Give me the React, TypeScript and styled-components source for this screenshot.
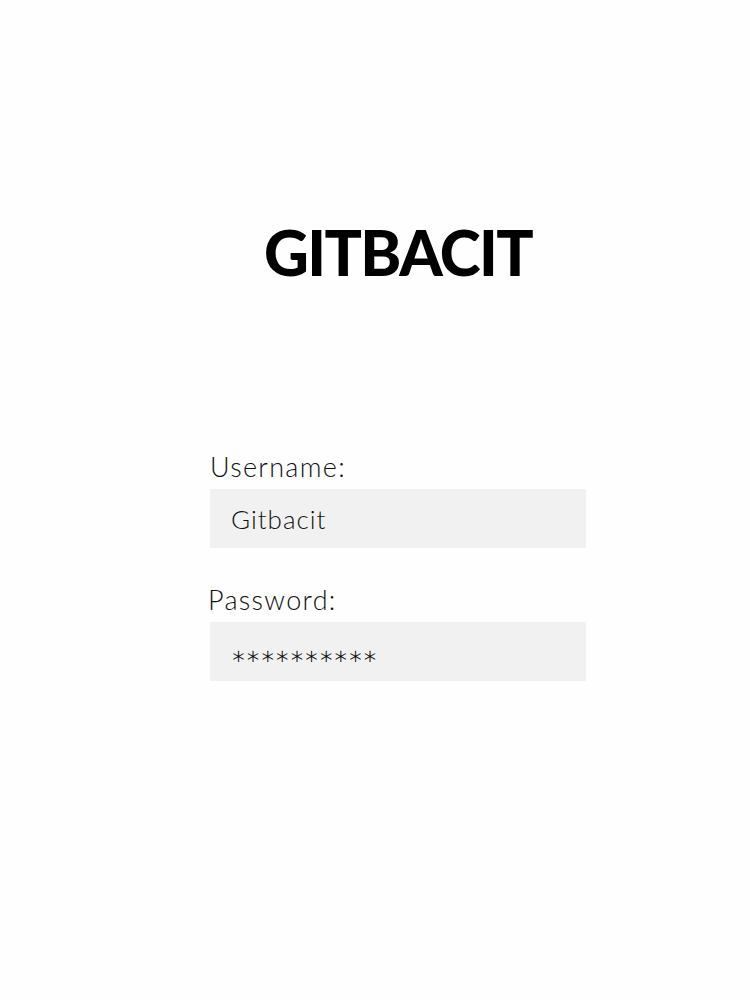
import React from "react";
import styled, { createGlobalStyle } from "styled-components";

const Global = createGlobalStyle`
  html, body { margin: 0; padding: 0; background: #fefefe; }
  * { box-sizing: border-box; }
`;

const Page = styled.div`
  width: 750px;
  height: 1000px;
  display: flex;
  flex-direction: column;
  align-items: flex-start;
  padding-left: 210px;
  padding-top: 214px;
`;

const Title = styled.h1`
  margin: 0;
  width: 376px;
  text-align: center;
  font-family: "Lato", sans-serif;
  font-weight: 900;
  font-size: 62px;
  line-height: 76px;
  letter-spacing: -1.6px;
  color: #000;
`;

const Form = styled.form`
  margin-top: 159px;
  width: 376px;
  display: flex;
  flex-direction: column;
`;

const Label = styled.label<{ $shift?: number }>`
  font-family: "Lato", sans-serif;
  font-weight: 300;
  font-size: 27px;
  line-height: 36px;
  letter-spacing: 1.3px;
  color: #111;
  margin-left: ${(p) => p.$shift ?? 0}px;
  margin-bottom: 4px;
`;

const Field = styled.div<{ $gap?: number }>`
  height: 59px;
  background: #f1f1f1;
  display: flex;
  align-items: center;
  padding-left: 21px;
  margin-bottom: ${(p) => p.$gap ?? 0}px;
  font-family: "Lato", sans-serif;
  font-weight: 300;
  font-size: 26px;
  letter-spacing: 1px;
  color: #111;
`;

const Stars = styled.span`
  font-family: "DejaVu Sans", sans-serif;
  font-size: 24px;
  letter-spacing: -0.4px;
  color: #000;
  -webkit-text-stroke: 0.3px #000;
  transform: translateY(4px);
`;

export default function App() {
  return (
    <>
      <Global />
      <Page>
        <Title>GITBACIT</Title>
        <Form>
          <Label>Username:</Label>
          <Field $gap={34}>Gitbacit</Field>
          <Label $shift={-2}>Password:</Label>
          <Field>
            <Stars>∗∗∗∗∗∗∗∗∗∗</Stars>
          </Field>
        </Form>
      </Page>
    </>
  );
}
